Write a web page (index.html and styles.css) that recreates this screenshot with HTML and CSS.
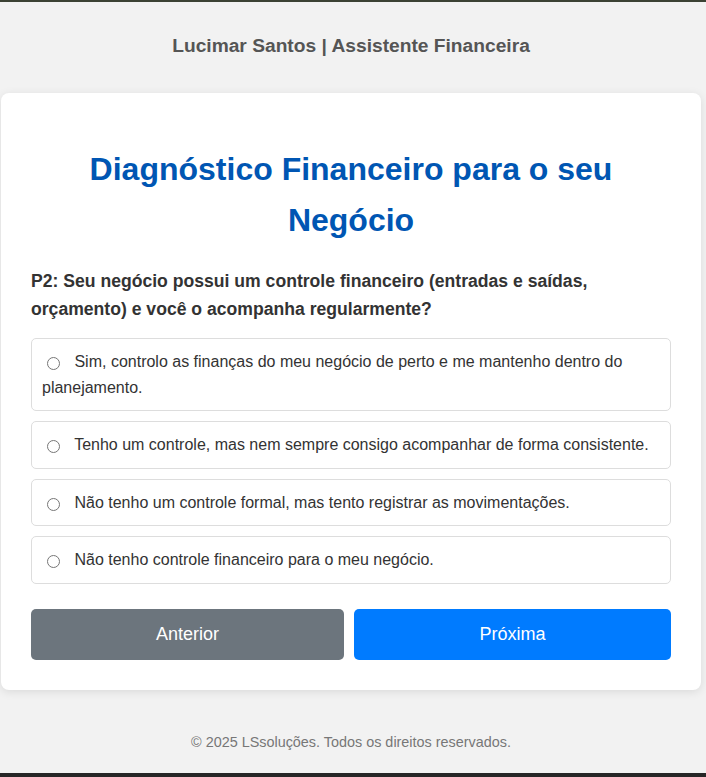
FILE: index.html
```html
<!DOCTYPE html>
<html lang="pt-BR">
<head>
<meta charset="utf-8">
<title>Diagnóstico Financeiro</title>
<link rel="stylesheet" href="styles.css">
</head>
<body>
<header class="site-header">Lucimar Santos | Assistente Financeira</header>
<main class="card">
  <h1 class="title">Diagnóstico Financeiro para o seu Negócio</h1>
  <p class="question">P2: Seu negócio possui um controle financeiro (entradas e saídas, orçamento) e você o acompanha regularmente?</p>
  <div class="options">
    <label class="option"><input type="radio" name="p2"> Sim, controlo as finanças do meu negócio de perto e me mantenho dentro do planejamento.</label>
    <label class="option"><input type="radio" name="p2"> Tenho um controle, mas nem sempre consigo acompanhar de forma consistente.</label>
    <label class="option"><input type="radio" name="p2"> Não tenho um controle formal, mas tento registrar as movimentações.</label>
    <label class="option"><input type="radio" name="p2"> Não tenho controle financeiro para o meu negócio.</label>
  </div>
  <div class="nav">
    <button class="btn btn-prev" type="button">Anterior</button>
    <button class="btn btn-next" type="button">Próxima</button>
  </div>
</main>
<footer class="site-footer">© 2025 LSsoluções. Todos os direitos reservados.</footer>
</body>
</html>
```

FILE: styles.css
```css
html {
  background: #262626;
}
body {
  box-sizing: border-box;
  margin: 0;
  padding-right: 4px;
  height: 773px;
  border-top: 2px solid #3b4234;
  background: #f2f2f2;
  font-family: "Liberation Sans", Arial, sans-serif;
  color: #333;
}
.site-header {
  padding: 32px 0 35px;
  text-align: center;
  font-size: 19.2px;
  line-height: 24px;
  font-weight: bold;
  color: #555;
}
.card {
  box-sizing: border-box;
  width: 700px;
  margin: 0 auto;
  padding: 30px;
  background: #fff;
  border-radius: 8px;
  box-shadow: 0 2px 10px rgba(0, 0, 0, 0.1);
}
.title {
  margin: 21px 0 21px;
  font-size: 32px;
  line-height: 51px;
  text-align: center;
  color: #0056b3;
}
.question {
  margin: 0 0 15px;
  font-size: 17.6px;
  line-height: 28px;
  font-weight: bold;
  color: #333;
}
.options {
  display: flex;
  flex-direction: column;
  gap: 10px;
}
.option {
  display: block;
  padding: 10px;
  border: 1px solid #ddd;
  border-radius: 5px;
  font-size: 16px;
  line-height: 25.6px;
  color: #333;
  cursor: pointer;
}
.option input {
  margin: 0 10px 0 5px;
  vertical-align: -3px;
}
.nav {
  display: grid;
  grid-template-columns: 313fr 317fr;
  gap: 10px;
  margin-top: 25px;
}
.btn {
  padding: 15px;
  border: none;
  border-radius: 5px;
  font-family: "Liberation Sans", Arial, sans-serif;
  font-size: 18px;
  line-height: 21px;
  color: #fff;
  cursor: pointer;
}
.btn-prev {
  background: #6c757d;
}
.btn-next {
  background: #007bff;
}
.site-footer {
  padding-top: 42px;
  text-align: center;
  font-size: 14.4px;
  line-height: 20px;
  color: #777;
}
```
